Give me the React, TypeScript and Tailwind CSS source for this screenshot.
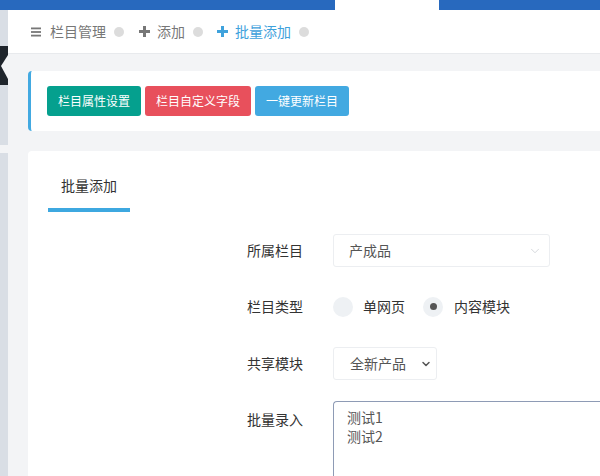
import { ChevronDown } from 'lucide-react'

const font = { fontFamily: '"Noto Sans CJK SC", "Liberation Sans", sans-serif' }

function Bars() {
  return (
    <svg width="10" height="10" viewBox="0 0 10 10" className="shrink-0">
      <rect x="0" y="0.5" width="10" height="1.8" fill="#777" />
      <rect x="0" y="4.1" width="10" height="1.8" fill="#777" />
      <rect x="0" y="7.7" width="10" height="1.8" fill="#777" />
    </svg>
  )
}

function Plus({ color }: { color: string }) {
  return (
    <svg width="11" height="11" viewBox="0 0 11 11" className="shrink-0">
      <rect x="4" y="0" width="3" height="11" fill={color} />
      <rect x="0" y="4" width="11" height="3" fill={color} />
    </svg>
  )
}

function Dot() {
  return <span className="inline-block w-[10px] h-[10px] rounded-full bg-[#dcdcdc]" />
}

export default function App() {
  return (
    <div className="w-[600px] h-[476px] overflow-hidden flex flex-col bg-[#f3f4f6]" style={font}>
      {/* top bar */}
      <div className="flex h-[10px] shrink-0">
        <div className="w-[335px] bg-[#2869be]" />
        <div className="w-[104px] bg-white" />
        <div className="flex-1 bg-[#2869be]" />
      </div>

      <div className="flex flex-1 min-h-0">
        {/* left strip */}
        <div className="w-[8px] shrink-0 flex flex-col">
          <div className="h-[36px] bg-[#d9dee5]" />
          <svg width="8" height="39" viewBox="0 0 8 39" className="block">
            <rect width="8" height="39" fill="#1f252c" />
            <polygon points="8,9 1,20 8,33" fill="#f3f4f6" />
          </svg>
          <div className="h-[60px] bg-[#d9dee5]" />
          <div className="h-[8px] bg-[#f3f4f6]" />
          <div className="flex-1 bg-[#d9dee5]" />
        </div>

        {/* main */}
        <div className="flex-1 min-w-0 flex flex-col">
          <div className="h-[44px] shrink-0 bg-white border-b border-[#e8eaed] flex items-center pl-[23px] text-[14px]">
            <Bars />
            <span className="ml-[9px] text-[#777]">栏目管理</span>
            <span className="ml-[8px]"><Dot /></span>
            <span className="ml-[15px]"><Plus color="#777" /></span>
            <span className="ml-[7px] text-[#777]">添加</span>
            <span className="ml-[8px]"><Dot /></span>
            <span className="ml-[14px]"><Plus color="#3fa2dc" /></span>
            <span className="ml-[7px] text-[#3fa2dc]">批量添加</span>
            <span className="ml-[8px]"><Dot /></span>
          </div>

          <div className="pl-[20px] pt-[17px]">
            <div className="h-[60px] bg-white border-l-[3px] border-[#42a9e1] rounded-l-[4px] flex items-center pl-[16px] gap-[4px] text-[12px] text-white">
              <button className="h-[30px] px-[11px] rounded-[3px] bg-[#05a08e]">栏目属性设置</button>
              <button className="h-[30px] px-[11px] rounded-[3px] bg-[#e8505c]">栏目自定义字段</button>
              <button className="h-[30px] px-[11px] rounded-[3px] bg-[#42a9e1]">一键更新栏目</button>
            </div>

            <div className="mt-[20px] bg-white rounded-l-[4px] pt-[20px] pl-[20px] h-[400px]">
              <div className="inline-block px-[13px] pt-[4px] pb-[13px] border-b-[4px] border-[#3ea8e0] text-[14px] leading-[20px] text-[#333]">
                批量添加
              </div>

              <div className="mt-[22px] text-[14px] text-[#333]">
                <div className="flex items-center h-[33px]">
                  <div className="w-[285px] text-right pr-[30px]">所属栏目</div>
                  <div className="w-[217px] h-[33px] border border-[#eceef1] rounded-[3px] flex items-center pl-[15px] pr-[7px] text-[#555]">
                    <span className="flex-1">产成品</span>
                    <ChevronDown size={14} strokeWidth={1.2} color="#c4c8ce" />
                  </div>
                </div>

                <div className="flex items-center h-[33px] mt-[23px]">
                  <div className="w-[285px] text-right pr-[30px]">栏目类型</div>
                  <span className="w-[20px] h-[20px] rounded-full bg-[#eef1f4]" />
                  <span className="ml-[10px]">单网页</span>
                  <span className="ml-[18px] w-[20px] h-[20px] rounded-full bg-[#eef1f4] flex items-center justify-center">
                    <span className="w-[7px] h-[7px] rounded-full bg-[#555]" />
                  </span>
                  <span className="ml-[11px]">内容模块</span>
                </div>

                <div className="flex items-center h-[33px] mt-[24px]">
                  <div className="w-[285px] text-right pr-[30px]">共享模块</div>
                  <div className="w-[104px] h-[33px] border border-[#eceef1] rounded-[3px] flex items-center pl-[16px] pr-[4px] text-[#555]">
                    <span className="flex-1">全新产品</span>
                    <ChevronDown size={12} strokeWidth={3} color="#555" />
                  </div>
                </div>

                <div className="flex items-start mt-[21px]">
                  <div className="w-[285px] text-right pr-[30px] pt-[8px]">批量录入</div>
                  <div className="flex-1 h-[120px] border border-[#8e9bb5] rounded-tl-[4px] border-r-0 pl-[13px] pt-[6px] leading-[19px] text-[#555]">
                    <div>测试1</div>
                    <div>测试2</div>
                  </div>
                </div>
              </div>
            </div>
          </div>
        </div>
      </div>
    </div>
  )
}
